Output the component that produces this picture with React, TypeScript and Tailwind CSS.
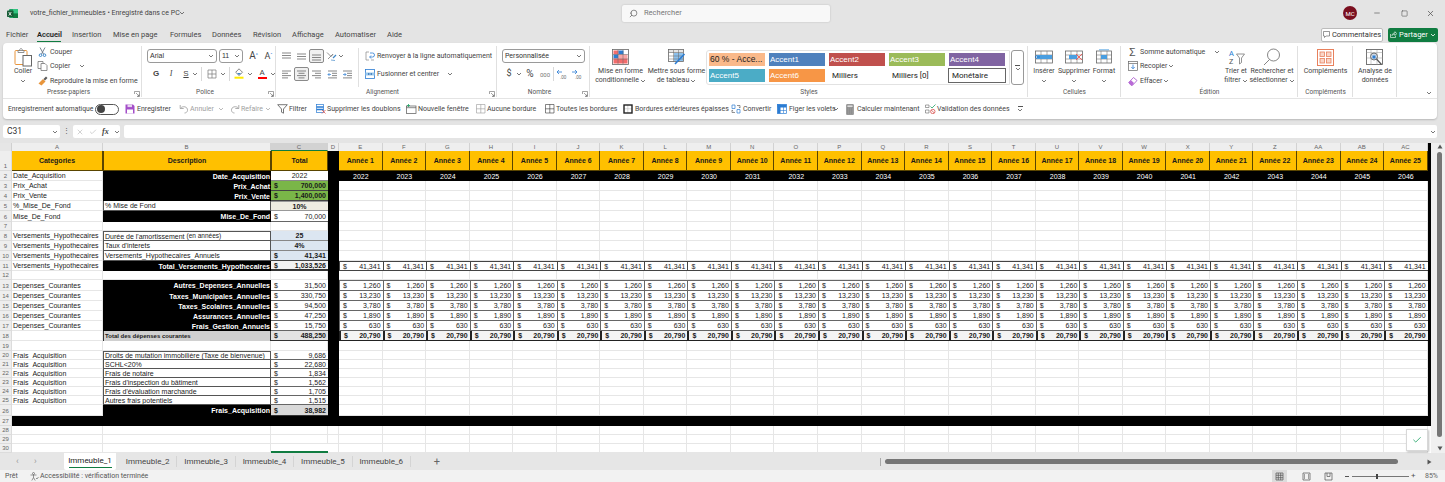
import React from "react";
import { Search, Minus, Square, X, Check } from "lucide-react";

const UI = "font-['Roboto',sans-serif]";
const XL = "font-['Liberation_Sans',Arial,sans-serif]";

const Ch = ({ c = "#555" }: { c?: string }) => (
  <svg width="6" height="4" viewBox="0 0 6 4" className="shrink-0"><path d="M1 1l2 2 2-2" fill="none" stroke={c} strokeWidth="0.8" /></svg>
);

const Launcher = () => (
  <svg width="6" height="6" viewBox="0 0 6 6" className="absolute right-[2px] bottom-[1px]"><path d="M.5 3V.5H5.5V5.5H3M2 2l3 3M5 3.5V5H3.5" fill="none" stroke="#666" strokeWidth="0.6" /></svg>
);

const Sep = ({ h = "h-[14px]", m = "mx-[3px]" }: { h?: string; m?: string }) => <div className={`w-px bg-[#d8d8d8] ${h} ${m}`} />;

const XlLogo = () => (
  <svg width="11" height="11" viewBox="0 0 11 11"><rect x="2" y="1" width="9" height="9" rx="1" fill="#21a366" /><rect x="6" y="1" width="5" height="4.5" fill="#33c481" /><rect x="6" y="5.5" width="5" height="4.5" fill="#107c41" /><rect x="0" y="2.5" width="6.5" height="6.5" rx="0.8" fill="#185c37" /><path d="M1.7 4l2.6 3.6M4.3 4L1.7 7.6" stroke="#fff" strokeWidth="0.8" /></svg>
);
const PasteI = () => (
  <svg width="19" height="20" viewBox="0 0 19 20"><rect x="1" y="3.5" width="12" height="14" rx="1" fill="#fff" stroke="#e8953c" /><path d="M4 3.5h6V5.5H4zM5.5 3.5C5.5 1 8.5 1 8.5 3.5" fill="#fff" stroke="#777" strokeWidth="0.8" /><rect x="9" y="8.5" width="8.5" height="10.5" fill="#fff" stroke="#666" /></svg>
);
const ScissorsI = () => (
  <svg width="9" height="10" viewBox="0 0 9 10"><path d="M2 .5l3.5 6.5M7 .5L3.5 7" stroke="#6b7785" strokeWidth="0.9" fill="none" /><circle cx="2.5" cy="8.2" r="1.3" fill="#fff" stroke="#3f87c7" /><circle cx="6.5" cy="8.2" r="1.3" fill="#fff" stroke="#3f87c7" /></svg>
);
const CopyI = () => (
  <svg width="11" height="10" viewBox="0 0 11 10"><path d="M1 .5h5V7.5H1z" fill="#fff" stroke="#777" strokeWidth="0.8" /><path d="M4 2.5h4l2 2V9.5H4z" fill="#fff" stroke="#777" strokeWidth="0.8" /></svg>
);
const BrushI = () => (
  <svg width="10" height="10" viewBox="0 0 10 10"><path d="M.5 7.5L5 3l2.5 2.5L3.5 9.5z" fill="#e8953c" /><path d="M5.5 3L8 .5l1.5 1.5L7 4.5z" fill="#5b5b5b" /></svg>
);
const VL = ({ y }: { y: number }) => (
  <svg width="11" height="11" viewBox="0 0 11 11"><path d={`M1 ${y}h9M1 ${y + 2.5}h9M1 ${y + 5}h9`} stroke="#555" strokeWidth="0.7" /></svg>
);
const HL = ({ k }: { k: "l" | "c" | "r" }) => {
  const d = k === "l" ? "M1 2h9M1 4.3h6M1 6.6h9M1 8.9h6" : k === "c" ? "M1 2h9M2.5 4.3h6M1 6.6h9M2.5 8.9h6" : "M1 2h9M4 4.3h6M1 6.6h9M4 8.9h6";
  return <svg width="11" height="11" viewBox="0 0 11 11"><path d={d} stroke="#555" strokeWidth="0.7" /></svg>;
};
const Indent = ({ rev }: { rev?: boolean }) => (
  <svg width="11" height="11" viewBox="0 0 11 11"><path d="M1 2h9M5 4.3h5M5 6.6h5M1 8.9h9" stroke="#555" strokeWidth="0.7" /><path d={rev ? "M1 5.5h3M2.5 4L4 5.5 2.5 7" : "M4 5.5H1M2.5 4L1 5.5 2.5 7"} stroke="#2b7cd3" strokeWidth="0.7" fill="none" /></svg>
);
const BorderI = () => (
  <svg width="10" height="10" viewBox="0 0 10 10"><path d="M1 1h8v8H1zM5 1v8M1 5h8" fill="none" stroke="#777" strokeWidth="0.7" /></svg>
);
const FillI = () => (
  <svg width="10" height="11" viewBox="0 0 10 11"><path d="M5 .8L8.5 4.3 5 7.5 1.7 4.3z" fill="#fff" stroke="#555" strokeWidth="0.7" /><path d="M3 5h4L5 7z" fill="#3f87c7" /><rect x="0.5" y="8.7" width="9" height="2" fill="#ffeb00" /></svg>
);
const OrientI = () => (
  <svg width="11" height="11" viewBox="0 0 11 11"><path d="M1 1.5l4 4 2-2M2 8l5-5" stroke="#666" strokeWidth="0.7" fill="none" /><path d="M7 7l3-3" stroke="#3f87c7" strokeWidth="1.2" /><path d="M9 9.5L5 9" stroke="#3f87c7" strokeWidth="0.7" /></svg>
);
const WrapI = () => (
  <svg width="10" height="10" viewBox="0 0 10 10"><path d="M4 1H1v8h3" fill="none" stroke="#888" strokeWidth="0.7" /><path d="M5 2h2.5a2 2 0 010 4H5M6 4.5L4.5 6 6 7.5" fill="none" stroke="#2b7cd3" strokeWidth="0.8" /><path d="M6 9h3" stroke="#888" strokeWidth="0.7" /></svg>
);
const MergeI = () => (
  <svg width="10" height="10" viewBox="0 0 10 10"><rect x=".5" y=".5" width="9" height="9" fill="#fff" stroke="#2b7cd3" strokeWidth="0.8" /><rect x=".5" y="3.5" width="9" height="3" fill="#9cc9ee" /><path d="M3 5h4M3 5l1-1M3 5l1 1M7 5L6 4M7 5L6 6" stroke="#1c5fa5" strokeWidth="0.5" /></svg>
);
const DecI = ({ rev }: { rev?: boolean }) => (
  <svg width="12" height="11" viewBox="0 0 12 11"><path d={rev ? "M6 3H1M3 1L1 3l2 2" : "M1 3h5M4 1l2 2-2 2"} fill="none" stroke="#2b7cd3" strokeWidth="0.8" /><text x="4" y="10" fontSize="4.5" fill="#666" fontFamily="Liberation Sans">.00</text></svg>
);
const CondI = () => (
  <svg width="18" height="16" viewBox="0 0 18 16"><rect x=".5" y=".5" width="16" height="15" fill="#fff" stroke="#666" strokeWidth="0.8" /><rect x="1.5" y="1.5" width="5" height="4" fill="#f26d6d" /><rect x="6.5" y="1.5" width="5" height="4" fill="#2b7cd3" /><rect x="1.5" y="5.5" width="5" height="4" fill="#2b7cd3" /><rect x="6.5" y="5.5" width="9" height="4" fill="#f9a6a6" /><rect x="1.5" y="9.5" width="14" height="5" fill="#f26d6d" /><path d="M6 1v14M11 1v14M1 5.5h15M1 10h15" stroke="#666" strokeWidth="0.5" /></svg>
);
const TableI = () => (
  <svg width="18" height="16" viewBox="0 0 18 16"><rect x=".5" y=".5" width="15" height="12" fill="#fff" stroke="#666" strokeWidth="0.8" /><rect x=".5" y=".5" width="15" height="3" fill="#e6e6e6" stroke="#666" strokeWidth="0.6" /><rect x="6" y="4" width="9" height="8" fill="#8cc0ec" /><path d="M5.5 1v12M10.5 1v12M1 7h14M1 10h14" stroke="#666" strokeWidth="0.5" /><path d="M7 15L16.5 5" stroke="#2b7cd3" strokeWidth="1.6" /></svg>
);
const CellI = ({ k }: { k: "ins" | "del" | "fmt" }) => (
  <svg width="18" height="16" viewBox="0 0 18 16">
    <rect x={k === "fmt" ? 1.5 : 0.5} y="2" width={k === "fmt" ? 15 : 17} height="12" fill="#fff" stroke="#666" strokeWidth="0.8" />
    <path d="M6 2v12M12 2v12M1 6h16M1 10h16" stroke="#777" strokeWidth="0.6" />
    <rect x={k === "fmt" ? 6 : k === "ins" ? 2 : 4} y="6" width={k === "fmt" ? 6 : k === "ins" ? 15 : 8} height="4" fill="#4a9ee0" />
    {k === "del" && <path d="M11 5l6 6M17 5l-6 6" stroke="#ef5350" strokeWidth="0.9" />}
    {k === "ins" && <path d="M5 8H0M2 6L0 8l2 2" stroke="#1c6fc0" strokeWidth="0.7" fill="none" />}
    {k === "fmt" && <path d="M4 .8h10" stroke="#4a9ee0" strokeWidth="0.8" />}
  </svg>
);
const EraseI = () => (
  <svg width="10" height="10" viewBox="0 0 10 10"><path d="M.7 6.5L5.5 1.5 9 4.5 4.5 9.3H3z" fill="#fff" stroke="#a44ec9" strokeWidth="0.8" /><path d="M.7 6.5L3 4.3 6 7 4.5 9.3H3z" fill="#b86ad6" /></svg>
);
const FillDown = () => (
  <svg width="10" height="10" viewBox="0 0 10 10"><rect x=".5" y=".5" width="9" height="9" fill="#fff" stroke="#666" strokeWidth="0.7" /><path d="M.5 2.5h9" stroke="#666" strokeWidth="0.7" /><path d="M5 3.5v4M3.3 6L5 7.8 6.7 6" stroke="#2b7cd3" strokeWidth="0.8" fill="none" /></svg>
);
const SortI = () => (
  <svg width="17" height="17" viewBox="0 0 17 17"><text x="1" y="7" fontSize="7.5" fill="#2b7cd3" fontFamily="Noto Sans">A</text><text x="1" y="15" fontSize="7.5" fill="#555" fontFamily="Noto Sans">Z</text><path d="M8.5 5h8l-3 4v4.5l-2 1.5V9z" fill="#fff" stroke="#666" strokeWidth="0.7" /></svg>
);
const FindI = () => (
  <svg width="18" height="18" viewBox="0 0 18 18"><circle cx="10.5" cy="7" r="6" fill="#fff" stroke="#666" strokeWidth="0.8" /><path d="M6.5 11.5L1 17" stroke="#777" strokeWidth="0.9" /></svg>
);
const AddinI = () => (
  <svg width="18" height="17" viewBox="0 0 18 17"><rect x=".5" y=".5" width="16" height="16" fill="#fff" stroke="#e8805c" /><g fill="#f9d6c8" stroke="#e8805c" strokeWidth="0.8"><rect x="3" y="3" width="4.5" height="4.5" /><rect x="9.5" y="3" width="4.5" height="4.5" /><rect x="3" y="9.5" width="4.5" height="4.5" /><rect x="9.5" y="9.5" width="4.5" height="4.5" /></g></svg>
);
const AnalyzeI = () => (
  <svg width="18" height="17" viewBox="0 0 18 17"><rect x=".5" y=".5" width="16" height="15" fill="#fff" stroke="#555" strokeWidth="0.8" /><path d="M.5 3.5h16M5 1v15M11 1v15M1 9h16" stroke="#999" strokeWidth="0.5" /><circle cx="8" cy="7.5" r="3.5" fill="#cfd8e3" stroke="#555" strokeWidth="0.8" /><rect x="6.5" y="6.5" width="3" height="3" fill="#2b7cd3" /><path d="M10.5 10l5 5.5" stroke="#555" strokeWidth="1.2" /></svg>
);
const SaveI = () => (
  <svg width="10" height="10" viewBox="0 0 10 10"><path d="M.5.5h7.5L9.5 2v7.5H.5z" fill="#a44ec9" /><rect x="2" y="5.5" width="6" height="4" fill="#fff" /><rect x="2.5" y=".5" width="4.5" height="2.6" fill="#e7d3f0" /></svg>
);
const UndoI = ({ flip }: { flip?: boolean }) => (
  <svg width="10" height="10" viewBox="0 0 10 10" className={flip ? "-scale-x-100" : ""}><path d="M1.2 1v3.5h3.5M1.5 4.3C3.5 1.5 9 2.5 8.5 6.5 8.3 8 7 9 5.5 9" fill="none" stroke="#9b9b9b" strokeWidth="0.8" /></svg>
);
const FilterI = () => (
  <svg width="11" height="10" viewBox="0 0 11 10"><path d="M.7.7h9.6L6.5 5v4.2l-2-1V5z" fill="#fff" stroke="#555" strokeWidth="0.8" /></svg>
);
const DedupI = () => (
  <svg width="10" height="10" viewBox="0 0 10 10"><rect x=".5" y=".5" width="7" height="8" fill="#fff" stroke="#2b7cd3" strokeWidth="0.7" /><path d="M.5 3h7M.5 5.5h7" stroke="#2b7cd3" strokeWidth="1.4" /><path d="M6 6l3.5 3.5M9.5 6L6 9.5" stroke="#d9534f" strokeWidth="0.8" /></svg>
);
const NewWinI = () => (
  <svg width="11" height="10" viewBox="0 0 11 10"><rect x=".5" y="2" width="9.5" height="7.5" fill="#fff" stroke="#555" strokeWidth="0.7" /><path d="M.5 3.7h9.5" stroke="#555" strokeWidth="0.7" /><path d="M2.5 0v3M1 1.5h3" stroke="#21a366" strokeWidth="0.8" /></svg>
);
const GridB = ({ c, w = 0.6 }: { c: string; w?: number }) => (
  <svg width="10" height="10" viewBox="0 0 10 10"><path d="M.5.5h8.5v8.5H.5z" fill="#fff" stroke={c} strokeWidth={w} /><path d="M4.8.5v8.5M.5 4.8h8.5" stroke={c} strokeWidth="0.6" /></svg>
);
const ThickB = () => (
  <svg width="10" height="10" viewBox="0 0 10 10"><path d="M4.8 1v8M1 4.8h8" stroke="#bbb" strokeWidth="0.6" /><rect x="1" y="1" width="8" height="8" fill="none" stroke="#222" strokeWidth="1.4" /></svg>
);
const ConvI = () => (
  <svg width="10" height="10" viewBox="0 0 10 10"><path d="M1 1h3v3.5H1zM6 5.5h3V9H6z" fill="#fff" stroke="#2b7cd3" strokeWidth="0.7" /><path d="M6 1.5h3V4M9 4L7.8 3M4 8.5H1V6M1 6l1.2 1" fill="none" stroke="#666" strokeWidth="0.7" /></svg>
);
const FreezeI = () => (
  <svg width="10" height="10" viewBox="0 0 10 10"><rect x=".5" y=".5" width="9" height="9" fill="#fff" stroke="#2b7cd3" strokeWidth="0.7" /><rect x=".5" y=".5" width="9" height="3" fill="#2b7cd3" /><rect x=".5" y=".5" width="3" height="9" fill="#2b7cd3" /><path d="M6.5 1v8M1 6.5h8" stroke="#2b7cd3" strokeWidth="0.6" /></svg>
);
const CalcI = () => (
  <svg width="8" height="11" viewBox="0 0 8 11"><rect x=".3" y=".3" width="7.4" height="10.4" rx=".5" fill="#777" /><rect x="1.3" y="1.3" width="5.4" height="2" fill="#ddd" /><path d="M1.5 5h1.2M3.5 5h1.2M5.5 5h1.2M1.5 7h1.2M3.5 7h1.2M5.5 7h1.2M1.5 9h1.2M3.5 9h1.2M5.5 9h1.2" stroke="#eee" strokeWidth="0.8" /></svg>
);
const ValidI = () => (
  <svg width="11" height="10" viewBox="0 0 11 10"><path d="M.5 1h3.5v2.5H.5zM.5 6h3.5v3H.5z" fill="#fff" stroke="#666" strokeWidth="0.6" /><path d="M5.5 2.5l1.5 1.5L10.5.5" fill="none" stroke="#21a366" strokeWidth="0.8" /><circle cx="7.8" cy="7.5" r="2.2" fill="#fff" stroke="#d9534f" strokeWidth="0.8" /><path d="M6.3 6l3 3" stroke="#d9534f" strokeWidth="0.8" /></svg>
);
const AccessI = () => (
  <svg width="9" height="9" viewBox="0 0 9 9"><circle cx="3.5" cy="1.5" r="1" fill="none" stroke="#555" strokeWidth="0.6" /><path d="M.5 3h6M3.5 3v2.5L1.8 8.5M3.5 5.5L5.2 8.5" fill="none" stroke="#555" strokeWidth="0.6" /><path d="M6 6l1 1 1.5-2" fill="none" stroke="#555" strokeWidth="0.6" /></svg>
);

const Big = ({ w, icon, l1, l2, chev, ml = "" }: { w: string; icon: React.ReactNode; l1: string; l2?: string; chev?: boolean; ml?: string }) => (
  <div className={`flex flex-col items-center shrink-0 ${w} ${ml}`}>
    <div className="h-[20px] flex items-center justify-center">{icon}</div>
    <div className="text-[7px] leading-[9px] text-[#444] whitespace-nowrap">{l1}</div>
    <div className="text-[7px] leading-[9px] text-[#444] whitespace-nowrap flex items-center justify-center gap-[1px] h-[9px]">
      {l2}
      {chev && <Ch />}
    </div>
  </div>
);

const Group = ({ w, label, children, launcher }: { w: string; label: string; children: React.ReactNode; launcher?: boolean }) => (
  <div className={`relative flex flex-col shrink-0 h-[55px] ${w}`}>
    <div className="flex-1 flex min-h-0">{children}</div>
    <div className={`h-[9px] mb-[1px] text-center text-[6.5px] leading-[9px] text-[#555] whitespace-nowrap ${launcher ? "pr-[8px]" : ""}`}>{label}</div>
    {launcher && <Launcher />}
    <div className="absolute right-0 top-[3px] bottom-[1px] w-px bg-[#e0e0e0]" />
  </div>
);

const Box = ({ children, sel = false }: { children: React.ReactNode; sel?: boolean }) => (
  <div className={`w-[15px] h-[14px] flex items-center justify-center rounded-[2px] ${sel ? "border border-[#8a8a8a] bg-[#f0f0f0]" : ""}`}>{children}</div>
);

const SmallRow = ({ icon, text, extra, w }: { icon: React.ReactNode; text: string; extra?: React.ReactNode; w: string }) => (
  <div className={`h-[15px] flex items-center ${w}`}>
    <div className="w-[11px] flex justify-center shrink-0">{icon}</div>
    <span className="ml-[2px] text-[7px] text-[#444] whitespace-nowrap">{text}</span>
    {extra}
  </div>
);

const styleRow1 = [
  ["60 % - Acce...", "bg-[#fab98a] text-[#222]"],
  ["Accent1", "bg-[#4f81bd] text-white"],
  ["Accent2", "bg-[#c0504d] text-white"],
  ["Accent3", "bg-[#9bbb59] text-white"],
  ["Accent4", "bg-[#8064a2] text-white"],
];
const styleRow2 = [
  ["Accent5", "bg-[#4bacc6] text-white"],
  ["Accent6", "bg-[#f79646] text-white"],
  ["Milliers", "bg-white text-[#222]"],
  ["Milliers [0]", "bg-white text-[#222]"],
  ["Monétaire", "bg-white text-[#222] outline outline-1 outline-[#666]"],
];

const styleFont = (t: string) =>
  t.startsWith("60") ? `text-[8.5px] ${XL}` : t.startsWith("Mill") || t.startsWith("Mon") ? "text-[8px] px-[3px]" : `text-[8px] ${XL}`;

const Ribbon = () => (
  <div className={`mx-[3px] w-[1434px] h-[76px] shrink-0 bg-white rounded-[4px] shadow-[0_1px_2px_rgba(0,0,0,0.2)] flex flex-col ${UI}`}>
    <div className="h-[56px] flex border-b border-[#e4e4e4] pr-[3px]">
      {/* Presse-papiers */}
      <Group w="w-[139px]" label="Presse-papiers" launcher>
        <div className="pl-[9px] pt-[4px] flex w-[34px] shrink-0"><Big w="w-[22px]" icon={<PasteI />} l1="Coller" chev /></div>
        <div className="pt-[2px] flex flex-col">
          <SmallRow w="w-[100px]" icon={<ScissorsI />} text="Couper" />
          <SmallRow w="w-[100px]" icon={<CopyI />} text="Copier" extra={<span className="ml-[9px]"><Ch /></span>} />
          <SmallRow w="w-[100px]" icon={<BrushI />} text="Reproduire la mise en forme" />
        </div>
      </Group>
      {/* Police */}
      <Group w="w-[134px]" label="Police" launcher>
        <div className="pl-[5px] pt-[6px] flex flex-col gap-[4px]">
          <div className="flex items-center h-[14px]">
            <div className={`w-[70px] h-[14px] border border-[#9a9a9a] rounded-[3px] flex items-center justify-between px-[2px] text-[7px] text-[#333] ${XL}`}>Arial<Ch /></div>
            <div className={`ml-[2px] w-[24px] h-[14px] border border-[#9a9a9a] rounded-[3px] flex items-center justify-between px-[2px] text-[7px] text-[#333] ${XL}`}>11<Ch /></div>
            <span className="ml-[3px] w-[15px] text-center text-[10px] leading-[10px] text-[#444]">A<sup className="text-[5px] text-[#2b7cd3]">^</sup></span>
            <span className="w-[15px] text-center text-[9px] leading-[10px] text-[#444]">A<sup className="text-[5px] text-[#2b7cd3]">ˇ</sup></span>
          </div>
          <div className="flex items-center h-[13px] text-[#444]">
            <span className={`ml-[4px] w-[10px] text-center font-bold text-[8px] ${XL}`}>G</span>
            <span className="ml-[5px] w-[10px] text-center italic text-[8px] font-['Liberation_Serif',serif]">I</span>
            <span className={`ml-[5px] w-[10px] text-center underline text-[8px] ${XL}`}>S</span>
            <span className="ml-[1px]"><Ch /></span>
            <Sep m="mx-[3px]" />
            <span className="ml-[2px]"><BorderI /></span>
            <span className="ml-[3px]"><Ch /></span>
            <Sep m="mx-[3px]" />
            <span className="ml-[1px]"><FillI /></span>
            <span className="ml-[3px]"><Ch /></span>
            <span className="ml-[4px] w-[10px] flex flex-col items-center text-[8px] leading-[8px]">A<span className="block w-[9px] h-[2px] bg-[#ff0000]" /></span>
            <span className="ml-[3px]"><Ch /></span>
          </div>
        </div>
      </Group>
      {/* Alignement */}
      <Group w="w-[221px]" label="Alignement" launcher>
        <div className="pl-[3px] pt-[6px] flex flex-col gap-[4px] w-[82px] shrink-0">
          <div className="flex items-center h-[14px]">
            <Box><VL y={2} /></Box>
            <Box><VL y={3} /></Box>
            <Box sel><VL y={4} /></Box>
            <span className="ml-[2px]"><OrientI /></span>
            <span className="ml-[1px]"><Ch /></span>
          </div>
          <div className="flex items-center h-[14px]">
            <Box><HL k="l" /></Box>
            <Box sel><HL k="c" /></Box>
            <Box><HL k="r" /></Box>
            <span className="w-[15px] ml-[1px] flex justify-center"><Indent /></span>
            <span className="flex justify-center w-[15px]"><Indent rev /></span>
          </div>
        </div>
        <div className="w-px h-[39px] mt-[5px] bg-[#e0e0e0]" />
        <div className="pl-[6px] pt-[6px] flex flex-col gap-[4px]">
          <div className="h-[14px] flex items-center text-[7px] text-[#444] whitespace-nowrap"><WrapI /><span className="ml-[2px]">Renvoyer à la ligne automatiquement</span></div>
          <div className="h-[14px] flex items-center text-[7px] text-[#444] whitespace-nowrap"><MergeI /><span className="ml-[2px]">Fusionner et centrer</span><span className="ml-[8px]"><Ch /></span></div>
        </div>
      </Group>
      {/* Nombre */}
      <Group w="w-[93px]" label="Nombre" launcher>
        <div className="pl-[5px] pt-[6px] flex flex-col gap-[4px]">
          <div className="w-[83px] h-[14px] border border-[#9a9a9a] rounded-[3px] flex items-center justify-between px-[2px] text-[7px] text-[#333]">Personnalisée<Ch /></div>
          <div className="flex items-center h-[14px] text-[#444]">
            <span className="ml-[2px] w-[10px] text-center text-[9px]">$</span>
            <span className="ml-[2px]"><Ch /></span>
            <span className="ml-[2px] w-[12px] text-center text-[10px] leading-[10px]">%</span>
            <span className="ml-[2px] w-[14px] text-center text-[6px] text-[#777]">000</span>
            <Sep m="mx-[1px]" />
            <span className="ml-[1px]"><DecI rev /></span>
            <span className="ml-[3px]"><DecI /></span>
          </div>
        </div>
      </Group>
      {/* Styles */}
      <Group w="w-[438px]" label="Styles">
        <div className="pl-[2px] pt-[4px] flex shrink-0">
          <Big w="w-[57px]" icon={<CondI />} l1="Mise en forme" l2="conditionnelle" chev />
          <Big w="w-[55px]" icon={<TableI />} l1="Mettre sous forme" l2="de tableau" chev />
        </div>
        <div className="ml-[2px] mt-[7px] w-[304px] h-[35px] border border-[#e2e2e2] rounded-l-[3px] flex flex-col justify-center gap-[3px] pl-[2px]">
          {[styleRow1, styleRow2].map((row, i) => (
            <div key={i} className="flex gap-[4px]">
              {row.map(([t, c]) => (
                <div key={t} className={`w-[56px] h-[13px] flex items-center px-[1px] whitespace-nowrap ${styleFont(t)} ${c}`}>{t}</div>
              ))}
            </div>
          ))}
        </div>
        <div className="ml-[1px] mt-[7px] w-[13px] h-[35px] border border-[#999] rounded-[3px] flex flex-col items-center justify-center">
          <span className="w-[5px] h-px bg-[#555] mb-[1px]" />
          <Ch />
        </div>
      </Group>
      {/* Cellules */}
      <Group w="w-[93px]" label="Cellules">
        <div className="pl-[2px] pt-[4px] flex">
          <Big w="w-[28px]" icon={<CellI k="ins" />} l1="Insérer" chev />
          <Big w="w-[32px]" icon={<CellI k="del" />} l1="Supprimer" chev />
          <Big w="w-[28px]" icon={<CellI k="fmt" />} l1="Format" chev />
        </div>
      </Group>
      {/* Edition */}
      <Group w="w-[177px]" label="Édition">
        <div className="pl-[6px] pt-[2px] flex flex-col w-[100px] shrink-0">
          <SmallRow w="w-[95px]" icon={<span className="text-[11px] leading-[11px] text-[#555]">Σ</span>} text="Somme automatique" extra={<span className="ml-[9px]"><Ch /></span>} />
          <SmallRow w="w-[95px]" icon={<FillDown />} text="Recopier" extra={<span className="ml-[1px]"><Ch /></span>} />
          <SmallRow w="w-[95px]" icon={<EraseI />} text="Effacer" extra={<span className="ml-[1px]"><Ch /></span>} />
        </div>
        <div className="pt-[4px] flex">
          <Big w="w-[30px]" icon={<SortI />} l1="Trier et" l2="filtrer" chev />
          <Big w="w-[42px]" icon={<FindI />} l1="Rechercher et" l2="sélectionner" chev />
        </div>
      </Group>
      {/* Complements */}
      <Group w="w-[55px]" label="Compléments">
        <div className="pt-[4px] flex w-full justify-center"><Big w="w-[50px]" icon={<AddinI />} l1="Compléments" /></div>
      </Group>
      <Group w="w-[44px]" label="">
        <div className="pt-[4px] flex w-full justify-center"><Big w="w-[42px]" icon={<AnalyzeI />} l1="Analyse de" l2="données" /></div>
      </Group>
      <div className="flex-1 flex items-end justify-end pb-[3px] pr-[2px]"><Ch /></div>
    </div>
    {/* Quick access */}
    <div className="flex-1 flex items-center text-[7px] text-[#444] whitespace-nowrap">
      <span className="ml-[5px] w-[87px] text-[6.75px]">Enregistrement automatique</span>
      <div className="w-[24px] h-[11px] rounded-full border border-[#555] flex items-center pl-[1px]"><span className="w-[8px] h-[8px] rounded-full bg-[#444]" /></div>
      <span className="ml-[6px]"><SaveI /></span><span className="ml-[2px] w-[42px]">Enregistrer</span>
      <UndoI /><span className="ml-[1px] w-[28px] text-[#a0a0a0]">Annuler</span><Ch c="#aaa" />
      <span className="ml-[6px]"><UndoI flip /></span><span className="ml-[1px] w-[24px] text-[#a0a0a0]">Refaire</span><Ch c="#aaa" />
      <span className="ml-[6px]"><FilterI /></span><span className="ml-[1px] w-[27px]">Filtrer</span>
      <DedupI /><span className="ml-[1px] w-[79px]">Supprimer les doublons</span>
      <NewWinI /><span className="ml-[1px] w-[58px]">Nouvelle fenêtre</span>
      <GridB c="#999" /><span className="ml-[1px] w-[58px]">Aucune bordure</span>
      <GridB c="#333" /><span className="ml-[1px] w-[67px]">Toutes les bordures</span>
      <ThickB /><span className="ml-[2px] w-[96px]">Bordures extérieures épaisses</span>
      <ConvI /><span className="ml-[2px] w-[34px]">Convertir</span>
      <FreezeI /><span className="ml-[2px] w-[44px]">Figer les volets</span><Ch />
      <span className="ml-[7px]"><CalcI /></span><span className="ml-[3px] w-[68px]">Calculer maintenant</span>
      <ValidI /><span className="ml-[1px] w-[80px]">Validation des données</span>
      <div className="flex flex-col items-center"><span className="w-[5px] h-px bg-[#555] mb-[1px]" /><Ch /></div>
    </div>
  </div>
);

const years = Array.from({ length: 25 }, (_, i) => i);
const CH = ["A", "B", "C", "D", "E", "F", "G", "H", "I", "J", "K", "L", "M", "N", "O", "P", "Q", "R", "S", "T", "U", "V", "W", "X", "Y", "Z", "AA", "AB", "AC"];

const aLabels: Record<number, string> = {
  2: "Date_Acquisition", 3: "Prix_Achat", 4: "Prix_Vente", 5: "%_Mise_De_Fond", 6: "Mise_De_Fond",
  8: "Versements_Hypothecaires", 9: "Versements_Hypothecaires", 10: "Versements_Hypothecaires", 11: "Versements_Hypothecaires",
  13: "Depenses_Courantes", 14: "Depenses_Courantes", 15: "Depenses_Courantes", 16: "Depenses_Courantes", 17: "Depenses_Courantes",
  20: "Frais_Acquisition", 21: "Frais_Acquisition", 22: "Frais_Acquisition", 23: "Frais_Acquisition", 24: "Frais_Acquisition", 25: "Frais_Acquisition",
};
const bBlack: Record<number, string> = {
  2: "Date_Acquisition", 3: "Prix_Achat", 4: "Prix_Vente", 6: "Mise_De_Fond", 11: "Total_Versements_Hypothecaires",
  13: "Autres_Depenses_Annuelles", 14: "Taxes_Municipales_Annuelles", 15: "Taxes_Scolaires_Annuelles", 16: "Assurances_Annuelles", 17: "Frais_Gestion_Annuels", 26: "Frais_Acquisition",
};
const bBox: Record<number, string> = {
  5: "% Mise de Fond", 9: "Taux d'interets", 10: "Versements_Hypothecaires_Annuels",
  20: "Droits de mutation immobilière (Taxe de bienvenue)", 21: "SCHL<20%", 22: "Frais de notaire", 23: "Frais d'inspection du bâtiment", 24: "Frais d'évaluation marchande", 25: "Autres frais potentiels",
};
const cMoney: Record<number, string> = {
  3: "700,000", 4: "1,400,000", 6: "70,000", 10: "41,341", 11: "1,033,526",
  13: "31,500", 14: "330,750", 15: "94,500", 16: "47,250", 17: "15,750", 18: "488,250",
  20: "9,686", 21: "22,680", 22: "1,834", 23: "1,562", 24: "1,705", 25: "1,515", 26: "38,982",
};
const yMoney: Record<number, string> = { 11: "41,341", 13: "1,260", 14: "13,230", 15: "3,780", 16: "1,890", 17: "630", 18: "20,790" };

const GRID = "border-r border-b border-[#e6e6e6]";

const Money = ({ v, cls }: { v: string; cls: string }) => (
  <div className={`flex items-center justify-between pl-[3px] pr-[2px] overflow-hidden whitespace-nowrap ${cls}`}><span>$</span><span>{v}</span></div>
);

const cCell = (r: number) => {
  const k = `c${r}`;
  if (r === 1) return <div key={k} className="bg-[#ffc000] font-bold flex items-center justify-center border-x border-b border-[#5a4500]">Total</div>;
  if (r === 2) return <div key={k} className="bg-white flex items-center justify-center border-b border-[#888]">2022</div>;
  if (r === 3 || r === 4) return <Money key={k} v={cMoney[r]} cls="bg-[#7ab648] font-bold border-b border-[#444]" />;
  if (r === 5) return <div key={k} className="bg-[#eeece1] font-bold flex items-center justify-center border-y border-[#999]">10%</div>;
  if (r === 8 || r === 9) return <div key={k} className="bg-[#dce6f1] font-bold flex items-center justify-center border-b border-[#888]">{r === 8 ? "25" : "4%"}</div>;
  if (r === 10) return <Money key={k} v={cMoney[r]} cls="bg-[#dce6f1] font-bold border-b border-[#444]" />;
  if (r === 11) return <Money key={k} v={cMoney[r]} cls="bg-[#f2f2f2] font-bold border-b-2 border-[#333]" />;
  if (r === 18) return <Money key={k} v={cMoney[r]} cls="bg-[#e3e3e3] font-bold border-b border-[#333]" />;
  if (r === 26) return <Money key={k} v={cMoney[r]} cls="bg-[#d9d9d9] font-bold border-b border-[#333]" />;
  if (r === 30) return <div key={k} className="bg-white border-b-2 border-[#107c41]" />;
  if (cMoney[r]) return <Money key={k} v={cMoney[r]} cls="bg-white border-b border-[#666]" />;
  return <div key={k} className={`bg-white ${GRID}`} />;
};

const bCell = (r: number) => {
  const k = `b${r}`;
  if (r === 1) return <div key={k} className="bg-[#ffc000] font-bold flex items-center justify-center border-x border-b border-[#5a4500]">Description</div>;
  if (bBlack[r]) return <div key={k} className="bg-black text-white font-bold flex items-center justify-end pr-[1px] whitespace-nowrap overflow-hidden">{bBlack[r]}</div>;
  if (r === 8) return <div key={k} className="bg-white flex items-center pl-[1px] border-x border-y border-[#555] whitespace-nowrap overflow-hidden">Durée de l'amortissement<span className="ml-[2px] text-[6.5px]">(en années)</span></div>;
  if (r === 18) return <div key={k} className="bg-[#d0d0d0] font-bold text-[6px] flex items-center pl-[1px] border-x border-[#333]">Total des dépenses courantes</div>;
  if (bBox[r]) return <div key={k} className={`bg-white flex items-center pl-[1px] border-x border-b border-[#555] whitespace-nowrap overflow-hidden ${r === 20 ? "border-t" : ""}`}>{bBox[r]}</div>;
  return <div key={k} className={`bg-white ${GRID}`} />;
};

const yCell = (r: number, i: number) => {
  const k = `y${r}-${i}`;
  if (r === 1) return <div key={k} className="bg-[#ffc000] font-bold flex items-center justify-center border-r border-b border-[#5a4500]">Année {i + 1}</div>;
  if (r === 2) return <div key={k} className="bg-black text-white flex items-center justify-center">{2022 + i}</div>;
  if (r === 11) return <Money key={k} v={yMoney[r]} cls="bg-white border-y border-l border-[#444]" />;
  if (r >= 13 && r <= 17) return <Money key={k} v={yMoney[r]} cls={`bg-white border-l border-b border-[#666] ${r === 13 ? "border-t" : ""}`} />;
  if (r === 18) return <Money key={k} v={yMoney[r]} cls="bg-[#f4f4f4] font-bold border-l-2 border-b border-[#222]" />;
  if (r === 27) return <div key={k} className="bg-black" />;
  return <div key={k} className={`bg-white ${GRID}`} />;
};

const Sheet = () => (
  <div className="h-[310px] flex bg-white shrink-0">
    <div className={`relative grid w-[1431px] text-[7px] leading-none text-[#1a1a1a] grid-cols-[12px_91px_168px_57px_11px_repeat(25,43.56px)_3px] grid-rows-[8px_20px_10px_10px_10px_10px_11px_9px_10px_10px_10px_10px_9px_11px_10px_10px_10px_10px_10px_10px_9px_9px_9px_9px_9px_9px_11px_10px_9px_9px_9px] ${XL}`}>
      <div className="bg-[#e6e6e6] border-r border-[#d0d0d0]" />
      {CH.map((c) => (
        <div key={c} className={`flex items-center justify-center text-[6px] text-[#666] border-r border-[#d2d2d2] ${c === "C" ? "bg-[#d2d2d2] border-b border-b-[#107c41]" : "bg-[#eeeeee]"}`}>{c}</div>
      ))}
      <div className="bg-black" />
      {Array.from({ length: 30 }, (_, n) => n + 1).map((r) => (
        <React.Fragment key={r}>
          <div className="bg-[#eeeeee] border-r border-b border-[#dcdcdc] flex items-end justify-center text-[6px] text-[#666] pb-[1px]">{r}</div>
          {r === 1 ? (
            <div className="bg-[#ffc000] font-bold flex items-center justify-center border-b border-r border-[#5a4500]">Categories</div>
          ) : r === 27 ? (
            <div className="bg-black" />
          ) : (
            <div className={`bg-white flex items-center pl-[1px] whitespace-nowrap overflow-hidden ${GRID}`}>{aLabels[r] ?? ""}</div>
          )}
          {r === 27 ? <div className="bg-black" /> : bCell(r)}
          {r === 27 ? <div className="bg-black" /> : cCell(r)}
          {r <= 27 ? <div className="bg-black" /> : <div className={`bg-white ${GRID}`} />}
          {years.map((i) => yCell(r, i))}
          {r <= 27 ? <div className="bg-black" /> : <div className="bg-white" />}
        </React.Fragment>
      ))}
      <div className="absolute right-[3px] top-[286px] w-[22px] h-[22px] bg-white border border-[#d8d8d8] shadow-[1px_1px_2px_rgba(0,0,0,0.25)] flex items-center justify-center">
        <Check size={10} color="#21a366" strokeWidth={2} />
      </div>
    </div>
    <div className="flex-1 bg-[#f0f0f0] flex flex-col items-center pl-[3px]">
      <svg width="6" height="5" viewBox="0 0 6 5" className="mt-[1px]"><path d="M3 .5L5.5 4.5H.5z" fill="#555" /></svg>
      <div className="w-[5px] h-[285px] mt-[3px] bg-[#767676] rounded-full" />
      <svg width="6" height="5" viewBox="0 0 6 5" className="mt-[9px]"><path d="M3 4.5L5.5 .5H.5z" fill="#555" /></svg>
    </div>
  </div>
);

const tabs = ["Immeuble_2", "Immeuble_3", "Immeuble_4", "Immeuble_5", "Immeuble_6"];

const TabBar = () => (
  <div className={`h-[17px] shrink-0 flex items-center bg-[#e6e6e6] text-[8px] text-[#444] ${UI}`}>
    <span className="ml-[16px] w-[18px] text-[#999] text-[9px]">‹</span>
    <span className="w-[30px] text-[#999] text-[9px]">›</span>
    <div className="w-[52px] mr-[3px] h-[17px] bg-white rounded-b-[2px] flex flex-col items-center justify-center">
      <span className="leading-[10px] text-[#222]">Immeuble_1</span>
      <span className="mt-[1px] w-[43px] h-[1px] bg-[#107c41]" />
    </div>
    {tabs.map((t) => (
      <div key={t} className="w-[58.4px] h-[11px] flex items-center justify-center border-r border-[#d4d4d4] whitespace-nowrap">{t}</div>
    ))}
    <span className="ml-[21px] w-[10px] text-[11px] leading-[11px] text-[#666] text-center">+</span>
    <div className="ml-[438px] flex items-center">
      <span className="w-[2px] h-[8px] border-l border-[#aaa] mr-[3px]" />
      <div className="w-[513px] h-[5px] rounded-full bg-[#767676]" />
      <svg width="5" height="6" viewBox="0 0 5 6" className="ml-[29px]"><path d="M.5.5L4.5 3 .5 5.5z" fill="#555" /></svg>
    </div>
  </div>
);

const StatusBar = () => (
  <div className={`h-[12px] shrink-0 flex items-center bg-[#f2f2f2] text-[7px] text-[#555] ${UI}`}>
    <span className="ml-[5px] w-[25px]">Prêt</span>
    <AccessI />
    <span className="ml-[1px]">Accessibilité : vérification terminée</span>
    <div className="ml-auto flex items-center h-[12px]">
      <div className="w-[15px] h-[12px] bg-[#dcdcdc] flex items-center justify-center"><svg width="9" height="9" viewBox="0 0 9 9"><path d="M1 1h7v7H1zM3.3 1v7M5.7 1v7M1 3.3h7M1 5.7h7" fill="none" stroke="#555" strokeWidth="0.7" /></svg></div>
      <div className="ml-[15px] w-[9px]"><svg width="9" height="9" viewBox="0 0 9 9"><path d="M1 1h7v7H1z" fill="none" stroke="#555" strokeWidth="0.7" /><path d="M2.5 2v5M6.5 2v5" stroke="#888" strokeWidth="0.8" /></svg></div>
      <div className="ml-[13px] w-[9px]"><svg width="9" height="9" viewBox="0 0 9 9"><path d="M1 1h7v7H1zM3 1v3.5h3V1" fill="none" stroke="#555" strokeWidth="0.7" /></svg></div>
      <span className="ml-[12px] w-[4px] h-px bg-[#555]" />
      <div className="relative ml-[3px] w-[57px] h-px bg-[#777]"><span className="absolute left-[24px] -top-[2px] w-[2px] h-[5px] bg-[#444]" /></div>
      <span className="ml-[2px] w-[5px] text-[8px] leading-[8px]">+</span>
      <span className="ml-[9px] mr-[8px] w-[12px] text-[#666]">85%</span>
    </div>
  </div>
);

const menu = ["Fichier", "Accueil", "Insertion", "Mise en page", "Formules", "Données", "Révision", "Affichage", "Automatiser", "Aide"];
const menuW = ["w-[31px]", "w-[35px]", "w-[41px]", "w-[57px]", "w-[42px]", "w-[41px]", "w-[39px]", "w-[43px]", "w-[52px]", "w-[30px]"];

export default function App() {
  return (
    <div className={`w-[1445px] h-[482px] overflow-hidden bg-[#e4e4e4] flex flex-col ${UI}`}>
      {/* Title */}
      <div className="h-[26px] shrink-0 flex items-center text-[7.5px] text-[#444]">
        <span className="ml-[7px] w-[23px]"><XlLogo /></span>
        <span className="whitespace-nowrap w-[149px] text-[7px]">votre_fichier_immeubles • Enregistré dans ce PC</span>
        <span className="w-[443px]"><Ch /></span>
        <div className="w-[208px] h-[17px] bg-[#f8f8f8] rounded-[2px] shadow-[0_0_2px_rgba(0,0,0,0.2)] flex items-center pl-[7px] text-[#777]">
          <Search size={9} className="-scale-x-100" color="#666" />
          <span className="ml-[6px]">Rechercher</span>
        </div>
        <div className="ml-[513px] w-[14px] h-[14px] rounded-full bg-[#7a0f1f] text-white text-[6px] flex items-center justify-center">MC</div>
        <Minus size={8} color="#555" className="ml-[16px]" />
        <Square size={7} color="#555" className="ml-[20px]" />
        <X size={9} color="#555" className="ml-[18px]" />
      </div>
      {/* Menu */}
      <div className="h-[17px] shrink-0 flex items-center text-[7.5px] text-[#444] pl-[6px]">
        {menu.map((m, i) => (
          <div key={m} className={`relative h-[17px] flex items-center whitespace-nowrap ${menuW[i]} ${i === 1 ? "font-semibold text-[#222]" : ""}`}>
            {m}
            {i === 1 && <span className="absolute left-0 bottom-[1px] w-[24px] h-[1px] bg-[#107c41]" />}
          </div>
        ))}
        <div className="ml-[904px] w-[62px] h-[14px] bg-white border border-[#bcbcbc] rounded-[2px] flex items-center justify-center gap-[2px] text-[#333]">
          <svg width="7" height="7" viewBox="0 0 7 7"><path d="M.5.5h6v4.5H3L1.5 6.5V5h-1z" fill="none" stroke="#555" strokeWidth="0.6" /></svg>
          Commentaires
        </div>
        <div className="ml-[5px] w-[50px] h-[14px] bg-[#107c41] rounded-[2px] flex items-center justify-center gap-[2px] text-white">
          <svg width="7" height="7" viewBox="0 0 7 7"><path d="M.5 3v3.5h5V5M2 4.5C2 2.5 4 2 5 2V.7L6.7 2.7 5 4.5V3.2C4 3.2 2.7 3.5 2 4.5z" fill="none" stroke="#fff" strokeWidth="0.6" /></svg>
          Partager
          <Ch c="#fff" />
        </div>
      </div>
      <Ribbon />
      <div className="h-[6px] shrink-0" />
      {/* Formula bar */}
      <div className="h-[13px] shrink-0 flex items-center text-[8.5px] text-[#333]">
        <div className="ml-[3px] w-[57px] h-[13px] bg-white rounded-[2px] flex items-center justify-between pl-[4px] pr-[2px]">C31<Ch /></div>
        <span className="w-[13px] text-center text-[7px] text-[#555]">⋮</span>
        <div className="w-[47px] h-[13px] bg-white rounded-[2px] flex items-center pl-[3px] gap-[5px]">
          <X size={8} color="#bbb" />
          <Check size={8} color="#bbb" />
          <span className="italic font-['Liberation_Serif',serif] font-bold text-[8px] text-[#444]">fx</span>
          <Ch />
        </div>
        <div className="ml-[4px] w-[1313px] h-[13px] bg-white rounded-[2px] flex items-center justify-end pr-[1px]"><Ch /></div>
      </div>
      <div className="h-[5px] shrink-0" />
      <Sheet />
      <TabBar />
      <StatusBar />
    </div>
  );
}
